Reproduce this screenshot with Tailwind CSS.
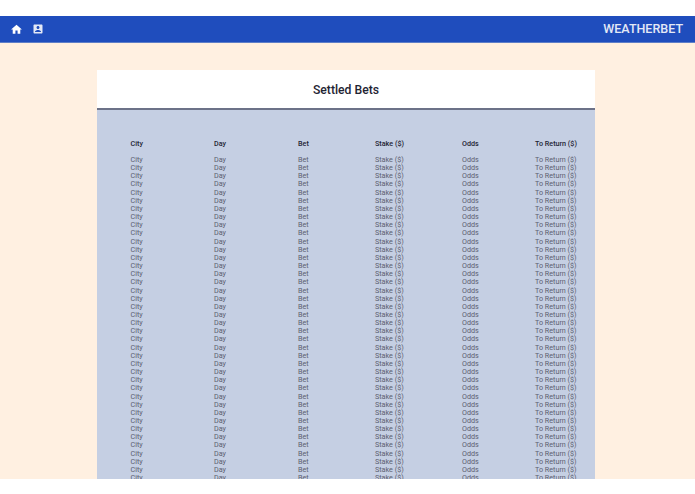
<!DOCTYPE html>
<html lang="en">
<head>
    <meta charset="UTF-8">
    <meta name="viewport" content="width=device-width, initial-scale=1.0">
    <title>Settled Bets</title>
    <script src="https://cdn.jsdelivr.net/npm/@tailwindcss/browser@4"></script>
</head>
<body class="bg-white h-[494px] overflow-hidden font-['Roboto',sans-serif]">
<div class="mt-4 h-[463px] bg-[#fff0e1] overflow-hidden flex flex-col">
    <nav class="h-[27px] shrink-0 bg-[#1f4dbd] border-b border-[#5f7fc8] flex items-center pl-[10px] pr-[12px]">
        <svg class="w-[13px] h-[13px] fill-white" viewBox="0 0 24 24"><path d="M10 20v-6h4v6h5v-8h3L12 3 2 12h3v8z"/></svg>
        <svg class="w-[12px] h-[12px] fill-[#e4e9f6] ml-[9px]" viewBox="0 0 24 24"><path d="M3 5v14c0 1.1.89 2 2 2h14c1.1 0 2-.9 2-2V5c0-1.1-.9-2-2-2H5c-1.11 0-2 .9-2 2zm12 4c0 1.66-1.34 3-3 3s-3-1.34-3-3 1.34-3 3-3 3 1.34 3 3zm-9 8c0-2 4-3.1 6-3.1s6 1.1 6 3.1v1H6v-1z"/></svg>
        <span class="ml-auto pt-px text-[12.5px] font-medium text-[#e4e9f6]">WEATHERBET</span>
    </nav>
    <main class="ml-[97px] mt-[27px] w-[498px]">
        <div class="h-[38px] pt-[3px] bg-white flex items-center justify-center text-[12.2px] font-medium text-[#1f2433]">Settled Bets</div>
        <div class="border-t-2 border-[#6c7288] bg-[#c5cfe3] h-[400px] pt-[29.5px] pl-[33.5px]">
            <div class="grid grid-cols-[83.5px_84px_77px_87px_73px_1fr] text-[7.2px] font-medium text-[#1f2433] leading-[8px] mb-[8.5px]">
                <span>City</span><span>Day</span><span>Bet</span><span>Stake ($)</span><span>Odds</span><span>To Return ($)</span>
            </div>
            <div id="rows" class="grid grid-cols-[83.5px_84px_77px_87px_73px_1fr] auto-rows-[8.17px] text-[7.2px] text-[#5c6070] leading-[8.17px]"></div>
        </div>
    </main>
</div>
<script>
    const cols = ['City', 'Day', 'Bet', 'Stake ($)', 'Odds', 'To Return ($)'];
    const rows = document.getElementById('rows');
    for (let i = 0; i < 42; i++) {
        cols.forEach(function(c) {
            const cell = document.createElement('span');
            cell.textContent = c;
            rows.appendChild(cell);
        });
    }
</script>
</body>
</html>
